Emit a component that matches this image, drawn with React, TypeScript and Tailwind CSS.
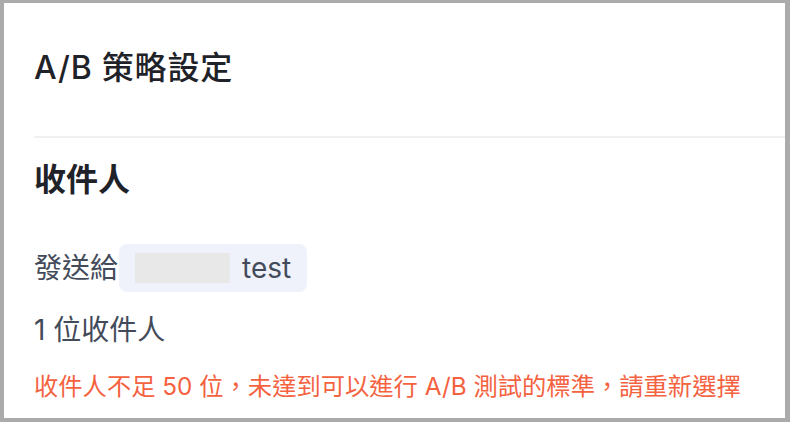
const App = () => {
  return (
    <div className="w-[790px] h-[422px] bg-[#ababab] pt-[3px] pl-[4px] pr-[5px] pb-[4px] font-['Inter','Noto_Sans_CJK_TC',sans-serif]">
      <div className="h-full bg-white pl-[30px] flex flex-col overflow-hidden">
        {/* Header */}
        <h1 className="mt-[47px] h-[36px] leading-[36px] text-[32px] font-medium text-[#1f2329] tracking-[0.8px]">
          A/B 策略設定
        </h1>
        <div className="mt-[50px] h-[2px] bg-[#f0f0f0]" />

        {/* Recipients */}
        <h2 className="mt-[22px] h-[40px] leading-[40px] text-[32px] font-bold text-[#1f2329]">
          收件人
        </h2>

        <div className="mt-[44px] h-[48px] flex items-center text-[28px] text-[#434b5a]">
          <span className="leading-[48px]">發送給</span>
          <div className="ml-[1px] h-[48px] flex items-center rounded-lg bg-[#eff2fa] pl-[16px] pr-[16px]">
            <div className="w-[95px] h-[30px] bg-[#e8e8e8]" />
            <span className="ml-[12px] leading-[48px]">test</span>
          </div>
        </div>

        <p className="mt-[20px] h-[36px] leading-[36px] text-[28px] text-[#434b5a]">
          1 位收件人
        </p>

        <p className="mt-[22px] h-[32px] leading-[32px] text-[24.3px] text-[#f4623f]">
          收件人不足 50 位，未達到可以進行 A/B 測試的標準，請重新選擇
        </p>
      </div>
    </div>
  );
};

export default App;
